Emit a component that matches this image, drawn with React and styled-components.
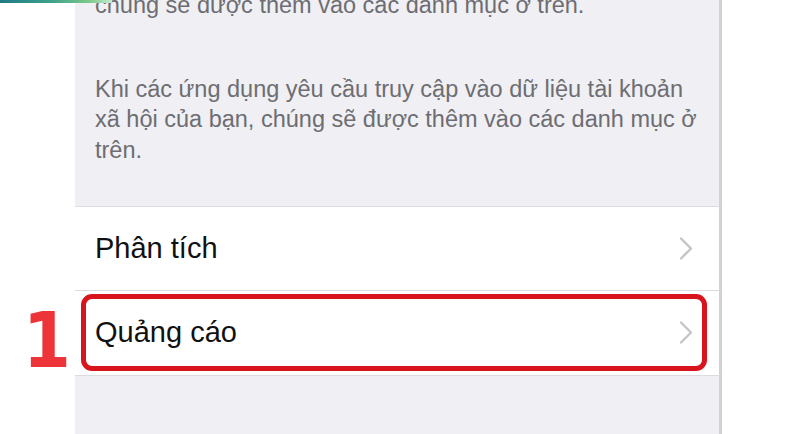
import React from "react";
import styled, { createGlobalStyle } from "styled-components";

const GlobalStyle = createGlobalStyle`
  html, body {
    margin: 0;
    padding: 0;
    background: #ffffff;
  }
  body {
    font-family: "Liberation Sans", Arial, sans-serif;
  }
`;

const Screen = styled.div`
  position: relative;
  display: grid;
  grid-template-columns: 75px 647px 1fr;
  grid-template-rows: 207px 84px 85px 1fr;
  width: 800px;
  height: 434px;
  overflow: hidden;
  background: #ffffff;
`;

const TopAccent = styled.div`
  position: absolute;
  top: 0;
  left: 0;
  width: 112px;
  height: 3px;
  background: linear-gradient(90deg, #1f7a86 0%, #3fa08a 45%, #7cc98a 80%, #c8ead0 100%);
`;

const Gutter = styled.div`
  display: flex;
  align-items: center;
  justify-content: flex-start;
  padding-left: ${p => p.$indent || 0}px;
`;

const StepNumber = styled.span`
  font-family: "DejaVu Sans", sans-serif;
  font-weight: 700;
  font-size: 77px;
  line-height: 1;
  color: #ec3439;
  margin-top: 14px;
  display: inline-block;
  transform: scaleX(0.9);
  transform-origin: center;
`;

const Panel = styled.div`
  box-sizing: border-box;
  border-right: 3px solid #d2d2d6;
  background: ${p => (p.$grouped ? "#efeff4" : "#ffffff")};
  border-bottom: ${p => (p.$divider ? "1px solid #dcdce0" : "none")};
  overflow: hidden;
`;

const Notes = styled(Panel)`
  padding: 0 8px 0 20px;
`;

const Note = styled.p`
  margin: ${p => p.$top}px 0 0;
  font-size: 23.5px;
  line-height: 30.5px;
  color: #6d6d72;
  white-space: nowrap;
`;

const RowWrap = styled(Panel)`
  display: flex;
  padding: 3px 12px 4px 6px;
`;

const RowInner = styled.div`
  flex: 1;
  display: flex;
  align-items: center;
  justify-content: space-between;
  padding: 0 9px;
  border: 5px solid ${p => (p.$highlighted ? "#d8141c" : "transparent")};
  border-radius: 11px;
`;

const RowLabel = styled.span`
  font-size: 29px;
  color: #111111;
`;

const Chevron = () => (
  <svg width="14" height="23" viewBox="0 0 14 23" fill="none">
    <path
      d="M2 1.5 L12 11.5 L2 21.5"
      stroke="#c4c4c9"
      strokeWidth="2.4"
      strokeLinecap="round"
      strokeLinejoin="round"
    />
  </svg>
);

const rows = [
  { label: "Phân tích", step: null },
  { label: "Quảng cáo", step: "1" },
];

export default function App() {
  return (
    <>
      <GlobalStyle />
      <Screen>
        <TopAccent />

        <Gutter />
        <Notes $grouped $divider>
          <Note $top={-10.4}>chúng sẽ được thêm vào các danh mục ở trên.</Note>
          <Note $top={53.5}>
            Khi các ứng dụng yêu cầu truy cập vào dữ liệu tài khoản
            <br />
            xã hội của bạn, chúng sẽ được thêm vào các danh mục ở
            <br />
            trên.
          </Note>
        </Notes>
        <div />

        {rows.map(row => (
          <React.Fragment key={row.label}>
            <Gutter $indent={20}>
              {row.step && <StepNumber>{row.step}</StepNumber>}
            </Gutter>
            <RowWrap $divider>
              <RowInner $highlighted={!!row.step}>
                <RowLabel>{row.label}</RowLabel>
                <Chevron />
              </RowInner>
            </RowWrap>
            <div />
          </React.Fragment>
        ))}

        <Gutter />
        <Panel $grouped />
        <div />
      </Screen>
    </>
  );
}
